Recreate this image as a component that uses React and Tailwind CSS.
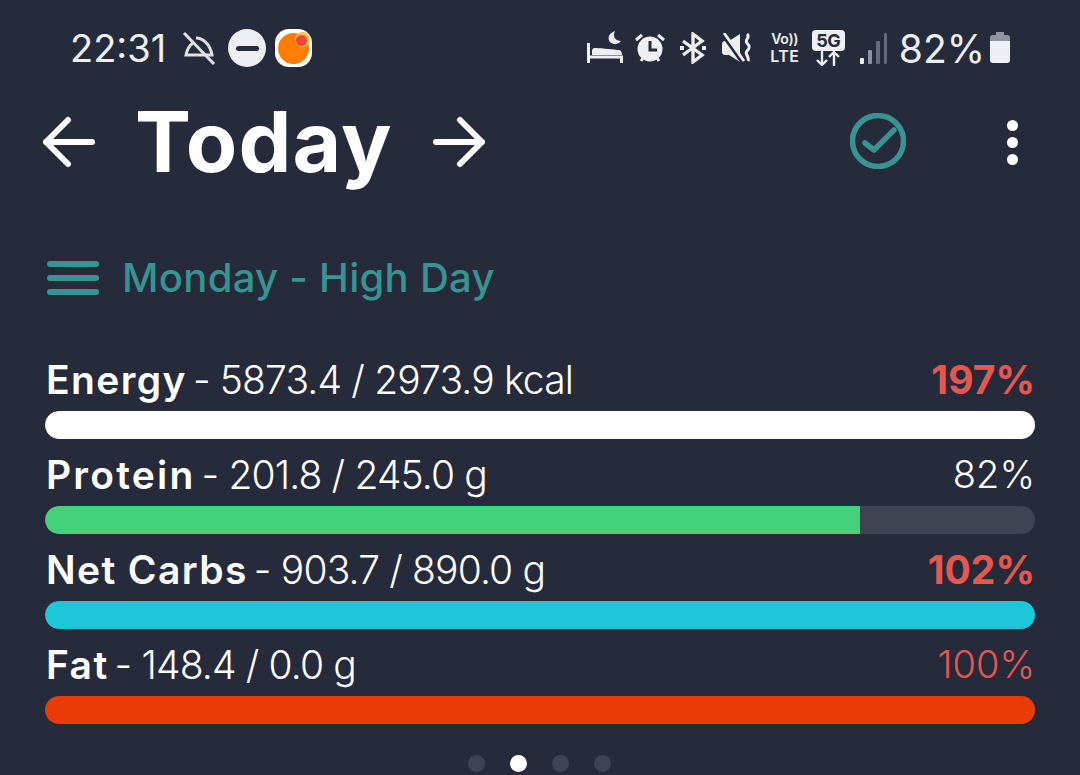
const font = { fontFamily: '"Inter","Noto Sans",sans-serif' };

function Bed() {
  return (
    <svg width="36" height="34" viewBox="0 0 36 34" fill="none">
      <path d="M1.5 12v20M1.5 26h33v6" stroke="#eef0f4" strokeWidth="3" />
      <path d="M5 24v-4c0-2 1-3 3-3 3 0 15 1 24 2 2 .4 3 2 3 5H5z" fill="#eef0f4" />
      <path d="M28 0C22 2 20 7 23 11c3 3 8 3 11-1-5 0-9-4-6-10z" fill="#eef0f4" />
    </svg>
  );
}
function Alarm() {
  return (
    <svg width="32" height="32" viewBox="0 0 32 32" fill="none">
      <circle cx="16" cy="17" r="12.500" fill="#eef0f4" />
      <path d="M16 9v9h7" stroke="#262b3b" strokeWidth="3" />
      <path d="M2 8l6-5M30 8l-6-5M7 29l2-3M25 29l-2-3" stroke="#eef0f4" strokeWidth="3" />
    </svg>
  );
}
function Bluetooth() {
  return (
    <svg width="28" height="32" viewBox="0 0 28 32" fill="none" stroke="#eef0f4" strokeWidth="3.400">
      <path d="M4 9l19 14-9 7V2l9 7L4 23" />
      <path d="M1 16h4M23 16h4" strokeWidth="3.800" />
    </svg>
  );
}
function Mute() {
  return (
    <svg width="32" height="30" viewBox="0 0 32 30" fill="none">
      <path d="M1 11c0-1.500 1-3 3-3h4l11-7v28L8 22H4c-2 0-3-1.500-3-3z" fill="#eef0f4" />
      <path d="M1 1l20 28" stroke="#262b3b" strokeWidth="3.500" />
      <path d="M3 0l20 28" stroke="#eef0f4" strokeWidth="2.800" />
      <path d="M26 1c4 3-3 6 0 9s3 5 0 8 3 6 1 10" stroke="#eef0f4" strokeWidth="3" />
    </svg>
  );
}
function Signal() {
  return (
    <svg width="28" height="32" viewBox="0 0 28 32">
      <rect x="1" y="26" width="4" height="6" rx="1" fill="#eef0f4" />
      <rect x="9" y="18" width="4" height="14" rx="1" fill="#8f93a0" />
      <rect x="17" y="9" width="4" height="23" rx="1" fill="#656a78" />
      <rect x="25" y="1" width="3" height="31" rx="1" fill="#656a78" />
    </svg>
  );
}
function StatusLeft() {
  return (
    <div className="flex items-center">
      <span className="text-[38px] leading-none text-[#eef0f4]">22:31</span>
      <svg className="ml-[15px]" width="36" height="36" viewBox="0 0 36 36" fill="none" stroke="#dfe1e7" strokeWidth="3">
        <path d="M3 3l30 31" />
        <path d="M12 13c-3 2-6 7-7 12h21M15 8c7 0 14 6 16 17h-5" />
      </svg>
      <div className="ml-[11px] w-[38px] h-[38px] rounded-full bg-[#eeeff2] flex items-center justify-center">
        <div className="w-[23px] h-[5px] rounded-full bg-[#262b3b]" />
      </div>
      <div className="ml-[9px] w-[37px] h-[38px] rounded-[14px] bg-white flex items-center justify-center relative">
        <div className="w-[31px] h-[31px] rounded-full bg-[#ff7d05]" />
        <div className="absolute right-[2px] top-[3px] w-[15px] h-[15px] rounded-full bg-[#ffc040]" />
        <div className="absolute right-[5px] top-[6px] w-[11px] h-[11px] rounded-full bg-[#f2453a]" />
      </div>
    </div>
  );
}
function StatusRight() {
  return (
    <div className="flex items-center">
      <Bed />
      <div className="ml-[11px]"><Alarm /></div>
      <div className="ml-[13px]"><Bluetooth /></div>
      <div className="ml-[14px]"><Mute /></div>
      <div className="ml-[16px] w-[32px] flex flex-col items-center text-[#eef0f4] font-semibold">
        <span className="text-[14px] leading-[17px] tracking-[-0.3px]">Vo))</span>
        <span className="text-[16px] leading-[19px] tracking-[0.5px]">LTE</span>
      </div>
      <div className="ml-[11px] w-[33px] flex flex-col items-center">
        <span className="w-[33px] h-[21px] bg-[#eef0f4] rounded-[4px] text-[#262b3b] text-[18px] font-bold leading-[21px] text-center tracking-[-0.5px]">5G</span>
        <svg width="26" height="15" viewBox="0 0 26 15" fill="none" stroke="#eef0f4" strokeWidth="2.400">
          <path d="M7 0v14M2 9l5 5 5-5M19 15V1M14 6l5-5 5 5" />
        </svg>
      </div>
      <div className="ml-[14px]"><Signal /></div>
      <span className="ml-[12px] text-[39px] leading-none text-[#eef0f4]">82%</span>
      <svg className="ml-[4px]" width="22" height="32" viewBox="0 0 22 32">
        <path d="M7 0h8v3H7z" fill="#8f93a0" />
        <path d="M1 6c0-2 1-3 3-3h14c2 0 3 1 3 3v3H1z" fill="#8f93a0" />
        <path d="M1 9h20v19c0 2-1 3-3 3H4c-2 0-3-1-3-3z" fill="#eef0f4" />
      </svg>
    </div>
  );
}
function Header() {
  return (
    <div className="flex items-center h-[96px] mt-[28px] pl-[43px] pr-[62px]">
      <svg width="52" height="52" viewBox="0 0 52 52" fill="none" stroke="#fff" strokeWidth="6" strokeLinecap="round" strokeLinejoin="round">
        <path d="M3 26h46M25 4L3 26l22 22" />
      </svg>
      <h1 className="ml-[40px] text-[84px] leading-none font-bold text-white tracking-[1.2px]">Today</h1>
      <svg className="ml-[40px]" width="52" height="52" viewBox="0 0 52 52" fill="none" stroke="#fff" strokeWidth="6" strokeLinecap="round" strokeLinejoin="round">
        <path d="M3 26h46M27 4l22 22-22 22" />
      </svg>
      <svg className="ml-auto -mt-[2px]" width="56" height="56" viewBox="0 0 56 56" fill="none" stroke="#389490" strokeLinecap="round" strokeLinejoin="round">
        <circle cx="28" cy="28" r="25.500" strokeWidth="5.500" />
        <path d="M15 30l9 7 20-20" strokeWidth="5.500" />
      </svg>
      <div className="ml-[101px] flex flex-col gap-[6px]">
        <div className="w-[11px] h-[11px] rounded-full bg-white" />
        <div className="w-[11px] h-[11px] rounded-full bg-white" />
        <div className="w-[11px] h-[11px] rounded-full bg-white" />
      </div>
    </div>
  );
}
function Row({ name, nameCls, vals, pct, pctCls, color, fill }) {
  return (
    <div className="flex flex-col">
      <div className="flex justify-between items-center h-[56px] pb-[8px] pl-[1px] text-white leading-none">
        <span className="text-[39px] tracking-[-0.85px]">
          <b className={"font-semibold " + nameCls}>{name}</b>
          <span className="font-light ml-[6px]">- {vals}</span>
        </span>
        <span className={pctCls}>{pct}</span>
      </div>
      <div className="h-[28px] rounded-full bg-[#404351] overflow-hidden">
        <div className="h-full rounded-l-full" style={{ width: fill, background: color }} />
      </div>
    </div>
  );
}
export default function App() {
  return (
    <div className="w-[1080px] h-[775px] overflow-hidden bg-[#262b3b]" style={font}>
      <div className="flex justify-between items-center h-[36px] mt-[30px] pl-[70px] pr-[69px]">
        <StatusLeft />
        <StatusRight />
      </div>
      <Header />
      <div className="flex items-center h-[60px] mt-[58px] pl-[47px]">
        <div className="w-[52px] flex flex-col gap-[8px]">
          <div className="h-[6px] rounded-full bg-[#389490]" />
          <div className="h-[6px] rounded-full bg-[#389490]" />
          <div className="h-[6px] rounded-full bg-[#389490]" />
        </div>
        <span className="ml-[23px] text-[40px] font-medium text-[#389490] tracking-[0.3px]">Monday - High Day</span>
      </div>
      <div className="mt-[47px] px-[45px] flex flex-col gap-[11px]">
        <Row name="Energy" nameCls="tracking-[1.4px]" vals="5873.4 / 2973.9 kcal" pct="197%" pctCls="text-[39px] font-bold text-[#e8574f]" color="#ffffff" fill="100%" />
        <Row name="Protein" nameCls="tracking-[2.2px]" vals="201.8 / 245.0 g" pct="82%" pctCls="text-[38px] font-light text-white" color="#45d07b" fill="82.300%" />
        <Row name="Net Carbs" nameCls="tracking-[1.4px]" vals="903.7 / 890.0 g" pct="102%" pctCls="text-[39px] font-bold text-[#e8574f]" color="#1cc7da" fill="100%" />
        <Row name="Fat" nameCls="tracking-[1.4px]" vals="148.4 / 0.0 g" pct="100%" pctCls="text-[38px] font-light text-[#e8574f]" color="#eb3b04" fill="100%" />
      </div>
      <div className="flex justify-center gap-[25px] mt-[31px] ml-[-2px]">
        <div className="w-[17px] h-[17px] rounded-full bg-[#404351]" />
        <div className="w-[17px] h-[17px] rounded-full bg-white" />
        <div className="w-[17px] h-[17px] rounded-full bg-[#404351]" />
        <div className="w-[17px] h-[17px] rounded-full bg-[#404351]" />
      </div>
    </div>
  );
}
